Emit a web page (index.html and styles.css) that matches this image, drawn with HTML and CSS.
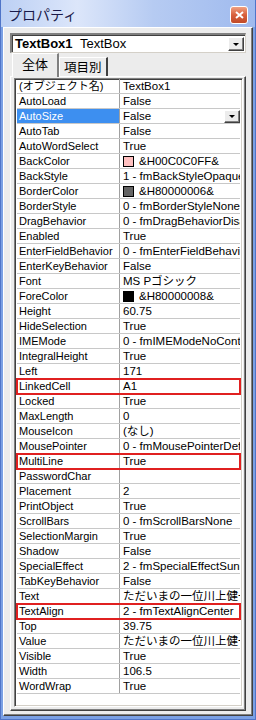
FILE: index.html
```html
<!DOCTYPE html>
<html lang="ja">
<head>
    <meta charset="UTF-8">
    <title>プロパティ</title>
    <link rel="stylesheet" href="styles.css">
</head>
<body>
    <div class="window">
        <div class="titlebar">
            <span class="title">プロパティ</span>
            <span class="close">
                <svg width="9" height="8" viewBox="0 0 9 8"><path d="M1 1 L8 7 M8 1 L1 7" stroke="#fff" stroke-width="2"/></svg>
            </span>
        </div>
        <div class="client">
            <div class="combo">
                <span class="combo-text"><b>TextBox1</b> TextBox</span>
                <span class="drop-btn"><i class="arrow"></i></span>
            </div>
            <div class="tabs">
                <span class="tab active">全体</span>
                <span class="tab">項目別</span>
            </div>
            <div class="panel">
                <div class="grid" id="grid"></div>
            </div>
        </div>
    </div>

    <script>
        // name, value, swatch colour, flag
        const props = [
            ["(オブジェクト名)", "TextBox1"],
            ["AutoLoad", "False"],
            ["AutoSize", "False", null, "selected"],
            ["AutoTab", "False"],
            ["AutoWordSelect", "True"],
            ["BackColor", "&H00C0C0FF&", "#ffc0c0"],
            ["BackStyle", "1 - fmBackStyleOpaque"],
            ["BorderColor", "&H80000006&", "#646464"],
            ["BorderStyle", "0 - fmBorderStyleNone"],
            ["DragBehavior", "0 - fmDragBehaviorDisabled"],
            ["Enabled", "True"],
            ["EnterFieldBehavior", "0 - fmEnterFieldBehaviorSelectAll"],
            ["EnterKeyBehavior", "False"],
            ["Font", "MS Pゴシック"],
            ["ForeColor", "&H80000008&", "#000000"],
            ["Height", "60.75"],
            ["HideSelection", "True"],
            ["IMEMode", "0 - fmIMEModeNoControl"],
            ["IntegralHeight", "True"],
            ["Left", "171"],
            ["LinkedCell", "A1", null, "marked"],
            ["Locked", "True"],
            ["MaxLength", "0"],
            ["MouseIcon", "(なし)"],
            ["MousePointer", "0 - fmMousePointerDefault"],
            ["MultiLine", "True", null, "marked"],
            ["PasswordChar", ""],
            ["Placement", "2"],
            ["PrintObject", "True"],
            ["ScrollBars", "0 - fmScrollBarsNone"],
            ["SelectionMargin", "True"],
            ["Shadow", "False"],
            ["SpecialEffect", "2 - fmSpecialEffectSunken"],
            ["TabKeyBehavior", "False"],
            ["Text", "ただいまの一位川上健一さん"],
            ["TextAlign", "2 - fmTextAlignCenter", null, "marked"],
            ["Top", "39.75"],
            ["Value", "ただいまの一位川上健一さん"],
            ["Visible", "True"],
            ["Width", "106.5"],
            ["WordWrap", "True"]
        ];

        const grid = document.getElementById("grid");
        for (const [name, value, swatch, flag] of props) {
            const row = document.createElement("div");
            row.className = "row" + (flag ? " " + flag : "");
            let val = value;
            if (swatch) {
                val = `<i class="swatch" style="background:${swatch}"></i>${value}`;
            }
            if (flag === "selected") {
                val += `<span class="drop-btn small"><i class="arrow"></i></span>`;
            }
            row.innerHTML = `<div class="name">${name}</div><div class="value">${val}</div>`;
            grid.appendChild(row);
        }
    </script>
</body>
</html>
```

FILE: styles.css
```css
body {
    margin: 0;
    font-family: "Liberation Sans", "Noto Sans CJK JP", sans-serif;
    font-size: 11px;
    color: #000;
}

.window {
    width: 256px;
    height: 720px;
    box-sizing: border-box;
    display: flex;
    flex-direction: column;
    background: #7aa0e4;
    border: 1px solid #4f74c8;
    border-top: none;
}

.titlebar {
    height: 27px;
    display: flex;
    align-items: center;
    justify-content: space-between;
    padding: 0 6px 0 7px;
    background: linear-gradient(90deg, #bcd0f4 0%, #dce6fa 30%, #b6cbf2 60%, #9fbaee 100%);
}

.title {
    font-size: 14px;
    color: #1a1a4a;
    font-family: "Noto Sans CJK JP", sans-serif;
}

.close {
    width: 18px;
    height: 18px;
    box-sizing: border-box;
    border: 1px solid #fff;
    border-radius: 3px;
    background: linear-gradient(180deg, #f0a080 0%, #d8603c 50%, #c04a28 100%);
    display: flex;
    align-items: center;
    justify-content: center;
    margin: 2px 1px 0 0;
}

.client {
    flex: 1;
    margin: 0 2px 3px 2px;
    background: #ececec;
    border-top: 1px solid #fff;
    border-left: 1px solid #fff;
    border-right: 1px solid #404040;
    border-bottom: 1px solid #404040;
    box-shadow: inset -1px -1px 0 #808080;
    padding: 5px 6px 4px 6px;
    display: flex;
    flex-direction: column;
}

.combo {
    height: 20px;
    box-sizing: border-box;
    background: #fff;
    border-top: 2px solid #808080;
    border-left: 2px solid #808080;
    border-right: 1px solid #d4d0c8;
    border-bottom: 1px solid #d4d0c8;
    box-shadow: inset 1px 1px 0 #404040;
    display: flex;
    align-items: center;
    justify-content: space-between;
    padding: 0 1px 0 3px;
    font-size: 13px;
}

.combo-text b {
    margin-right: 4px;
}

.drop-btn {
    width: 16px;
    height: 14px;
    box-sizing: border-box;
    background: #ececec;
    border-top: 1px solid #fff;
    border-left: 1px solid #fff;
    border-right: 1px solid #404040;
    border-bottom: 1px solid #404040;
    box-shadow: inset -1px -1px 0 #808080;
    display: flex;
    align-items: center;
    justify-content: center;
}

.arrow {
    width: 0;
    height: 0;
    border-left: 3px solid transparent;
    border-right: 3px solid transparent;
    border-top: 3px solid #000;
    margin-top: 1px;
}

.tabs {
    display: flex;
    align-items: flex-end;
    height: 23px;
    padding-left: 2px;
}

.tab {
    height: 19px;
    box-sizing: border-box;
    padding: 0 4px;
    border-top: 1px solid #fff;
    border-left: 1px solid #fff;
    border-right: 2px solid #404040;
    font-size: 12.5px;
    line-height: 18px;
    font-family: "Noto Sans CJK JP", sans-serif;
    white-space: nowrap;
    flex: none;
}

.tab.active {
    height: 24px;
    padding: 0 9px;
    margin-bottom: -1px;
    background: #ececec;
    position: relative;
    border-right-color: #808080;
    line-height: 20px;
    font-size: 13px;
}

.panel {
    flex: 1;
    border-top: 1px solid #fff;
    border-left: 1px solid #fff;
    border-right: 1px solid #404040;
    border-bottom: 1px solid #404040;
    box-shadow: inset -1px -1px 0 #808080;
    padding: 1px 2px 3px 3px;
    display: flex;
}

.grid {
    flex: 1;
    background: #fff;
    border-top: 1px solid #808080;
    border-left: 1px solid #808080;
    border-right: 1px solid #fff;
    border-bottom: 1px solid #fff;
    box-shadow: inset 1px 1px 0 #404040, inset -1px -1px 0 #d4d0c8;
    padding: 0 2px 0 2px;
    overflow: hidden;
}

.row {
    display: grid;
    grid-template-columns: 103px 1fr;
    height: 15px;
    box-sizing: border-box;
    border-bottom: 1px solid #c8c8c8;
    line-height: 14px;
    white-space: nowrap;
}

.name {
    padding-left: 2px;
    border-right: 1px solid #a0a0a0;
    overflow: hidden;
}

.value {
    padding-left: 3px;
    overflow: hidden;
    display: flex;
    align-items: center;
    font-size: 11.5px;
}

.row.selected .name {
    background: #3d8ff0;
    color: #fff;
}

.drop-btn.small {
    margin-left: auto;
    height: 13px;
    flex: none;
}

.row.marked {
    outline: 2px solid #e02020;
    outline-offset: -1px;
}

.swatch {
    width: 9px;
    height: 9px;
    border: 1px solid #000;
    margin-right: 5px;
    flex: none;
}
```
